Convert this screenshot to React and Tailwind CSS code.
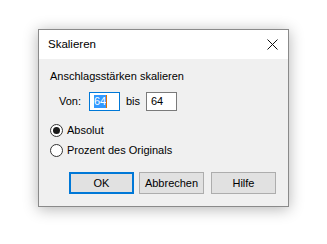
import React from "react";

const font = { fontFamily: '"Liberation Sans", Arial, sans-serif' };

function Radio({ checked, label }) {
  return (
    <label className="flex items-center h-[15px] gap-[4px]">
      <span className="w-[13px] h-[13px] rounded-full border border-[#333] bg-white flex items-center justify-center">
        {checked && <span className="w-[7px] h-[7px] rounded-full bg-[#1a1a1a]" />}
      </span>
      <span>{label}</span>
    </label>
  );
}

function Btn({ children, primary }) {
  return (
    <button
      className={
        "w-[65px] h-[22px] bg-[#e1e1e1] flex items-center justify-center " +
        (primary ? "border-2 border-[#0078d7]" : "border border-[#adadad]")
      }
    >
      {children}
    </button>
  );
}

export default function App() {
  return (
    <div className="min-h-screen bg-white pl-[38px] pt-[29px] text-[11px] text-black" style={font}>
      <div className="w-[251px] h-[178px] border border-[#8a8a8a] shadow-[0_2px_14px_rgba(0,0,0,0.3)] flex flex-col bg-[#f0f0f0]">
        {/* title bar */}
        <div className="h-[29px] bg-white flex items-center justify-between pl-[9px] pr-[10px]">
          <span className="text-[11.5px]">Skalieren</span>
          <svg width="11" height="11" viewBox="0 0 11 11">
            <path d="M0.5 0.5 L10.5 10.5 M10.5 0.5 L0.5 10.5" stroke="#111" strokeWidth="1" />
          </svg>
        </div>

        {/* body */}
        <div className="flex-1 pl-[11px] pt-[10px]">
          <div className="leading-[15px]">Anschlagsstärken skalieren</div>

          <div className="flex items-center mt-[8px] pl-[9px]">
            <span className="w-[30px]">Von:</span>
            <div className="w-[31px] h-[19px] border border-[#0078d7] bg-white flex items-center pl-[4px]">
              <span className="bg-[#3399ff] text-white leading-[13px]">64</span>
              <span className="w-[1px] h-[13px] bg-[#e07000]" />
            </div>
            <span className="ml-[6px] w-[20px]">bis</span>
            <div className="w-[31px] h-[19px] border border-[#7a7a7a] bg-white flex items-center pl-[4px]">
              64
            </div>
          </div>

          <div className="mt-[12px] flex flex-col gap-[5px]">
            <Radio checked label="Absolut" />
            <Radio label="Prozent des Originals" />
          </div>

          <div className="flex mt-[14px] ml-[19px]">
            <Btn primary>OK</Btn>
            <div className="ml-[5px]">
              <Btn>Abbrechen</Btn>
            </div>
            <div className="ml-[7px]">
              <Btn>Hilfe</Btn>
            </div>
          </div>
        </div>
      </div>
    </div>
  );
}
